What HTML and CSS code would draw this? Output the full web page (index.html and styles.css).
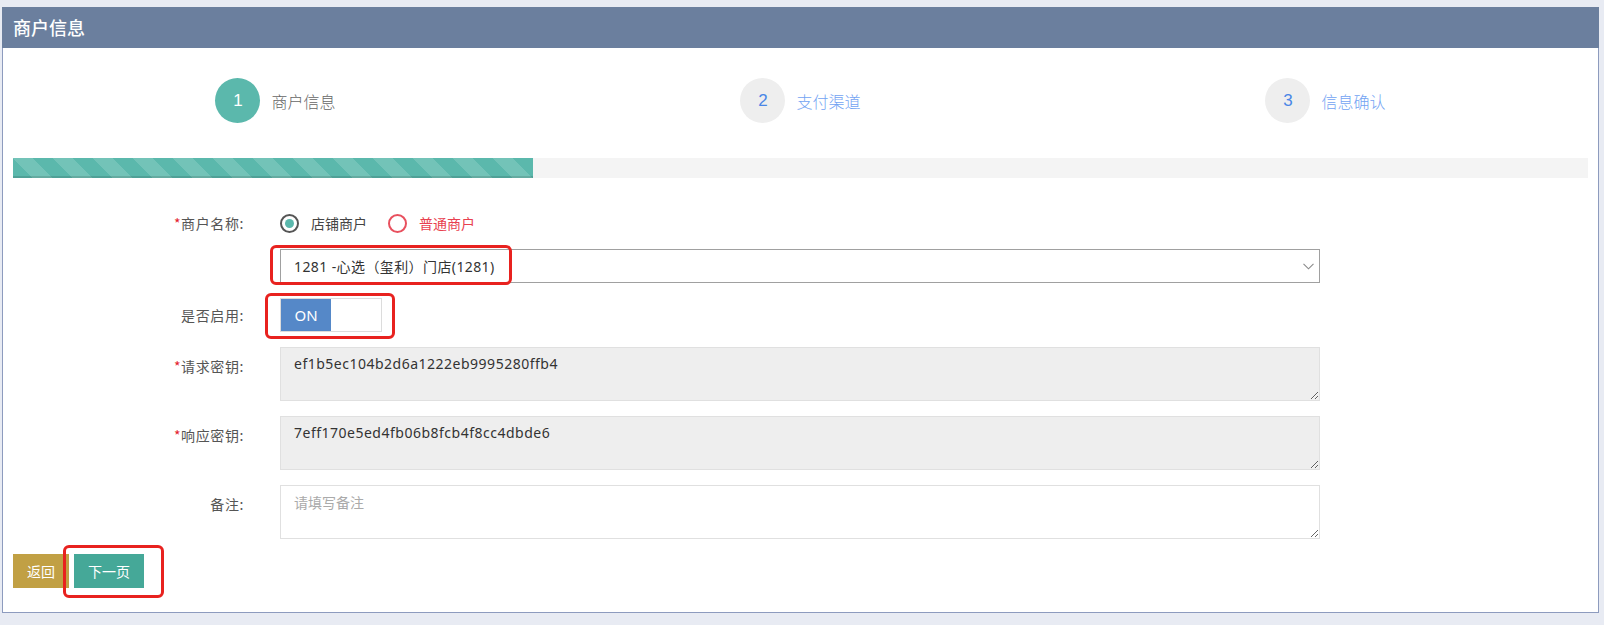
FILE: index.html
```html
<!DOCTYPE html>
<html lang="zh-CN">
<head>
<meta charset="utf-8">
<title>商户信息</title>
<link rel="stylesheet" href="styles.css">
</head>
<body>
<div class="page">
  <div class="panel">
    <div class="panel-head">商户信息</div>
    <div class="panel-body">
      <div class="steps">
        <div class="step active"><span class="step-num">1</span><span class="step-text">商户信息</span></div>
        <div class="step"><span class="step-num">2</span><span class="step-text">支付渠道</span></div>
        <div class="step"><span class="step-num">3</span><span class="step-text">信息确认</span></div>
      </div>
      <div class="progress"><div class="progress-fill" style="width:520px"></div></div>

      <div class="form">
        <div class="row row-radio">
          <label class="lbl"><span class="req">*</span>商户名称:</label>
          <div class="field radios">
            <span class="radio checked"><span class="radio-dot"></span>店铺商户</span>
            <span class="radio red"><span class="radio-dot"></span>普通商户</span>
          </div>
        </div>
        <div class="row row-select">
          <span class="lbl"></span>
          <div class="field select-wrap">
            <select class="select"><option>1281 -心选（玺利）门店(1281)</option></select>
            <svg class="chev" width="11" height="7" viewBox="0 0 11 7"><path d="M0.5 0.8 L5.5 5.8 L10.5 0.8" fill="none" stroke="#8a8a8a" stroke-width="1.1"/></svg>
          </div>
        </div>
        <div class="row row-toggle">
          <label class="lbl">是否启用:</label>
          <div class="field">
            <div class="switch"><span class="switch-on">ON</span><span class="switch-off"></span></div>
          </div>
        </div>
        <div class="row row-ta">
          <label class="lbl"><span class="req">*</span>请求密钥:</label>
          <div class="field"><textarea class="ta readonly" readonly>ef1b5ec104b2d6a1222eb9995280ffb4</textarea></div>
        </div>
        <div class="row row-ta">
          <label class="lbl"><span class="req">*</span>响应密钥:</label>
          <div class="field"><textarea class="ta readonly" readonly>7eff170e5ed4fb06b8fcb4f8cc4dbde6</textarea></div>
        </div>
        <div class="row row-ta">
          <label class="lbl">备注:</label>
          <div class="field"><textarea class="ta" placeholder="请填写备注"></textarea></div>
        </div>
      </div>

      <div class="actions">
        <button class="btn btn-back">返回</button>
        <button class="btn btn-next">下一页</button>
      </div>
    </div>
  </div>

  <div class="mark mark-select"></div>
  <div class="mark mark-switch"></div>
  <div class="mark mark-btn"></div>
</div>
</body>
</html>
```

FILE: styles.css
```css
* { box-sizing: border-box; }
html, body { margin: 0; padding: 0; }
body {
  background: #e8ebf3;
  font-family: "Noto Sans", "Noto Sans CJK SC", sans-serif;
  color: #333;
  width: 1604px;
  height: 625px;
  overflow: hidden;
}
.page {
  position: relative;
  padding-top: 7px;
}
.panel {
  margin: 0 5px 0 2px;
  border: 1px solid #8d9bbe;
  border-top: 0;
  background: #fff;
}
.panel-head {
  height: 41px;
  margin: 0 -1px;
  background: #6b7f9e;
  color: #fff;
  font-family: "Noto Sans CJK SC", sans-serif;
  font-size: 18px;
  font-weight: 500;
  line-height: 41px;
  padding-left: 11px;
}
.panel-body {
  padding: 30px 10px 24px 10px;
}
.steps {
  display: grid;
  grid-template-columns: repeat(3, 1fr);
  height: 45px;
}
.step {
  display: flex;
  align-items: center;
  justify-content: center;
  gap: 11px;
}
.step-num {
  width: 45px;
  height: 45px;
  border-radius: 50%;
  background: #eeeeee;
  color: #4a86e6;
  font-family: "Liberation Sans", sans-serif;
  font-size: 17px;
  display: flex;
  align-items: center;
  justify-content: center;
}
.step-text {
  font-family: "Noto Sans CJK SC", sans-serif;
  font-size: 16px;
  font-weight: 300;
  color: #72a3f3;
}
.step.active .step-num { background: #5bb8ac; color: #fff; }
.step.active .step-text { color: #666; }

.progress {
  margin-top: 35px;
  height: 20px;
  background: #f4f4f4;
}
.progress-fill {
  height: 20px;
  background-color: #5bb8ac;
  background-image: linear-gradient(45deg, rgba(255,255,255,.15) 25%, transparent 25%, transparent 50%, rgba(255,255,255,.15) 50%, rgba(255,255,255,.15) 75%, transparent 75%, transparent);
  background-size: 40px 40px;
  box-shadow: inset 0 -2px 0 rgba(0,0,0,.12);
}

.form {
  margin-top: 28px;
  display: flex;
  flex-direction: column;
}
.row {
  display: grid;
  grid-template-columns: 231px 1040px;
  column-gap: 36px;
  margin-bottom: 15px;
}
.row-radio { height: 34px; margin-bottom: 9px; }
.lbl {
  text-align: right;
  font-family: "Noto Sans CJK SC", sans-serif;
  font-size: 14px;
  letter-spacing: 0.6px;
  color: #555;
  line-height: 34px;
}
.req { color: #e4202c; }
.field { position: relative; }

.radios {
  display: flex;
  align-items: center;
  gap: 21px;
}
.radio {
  display: flex;
  align-items: center;
  gap: 12px;
  font-family: "Noto Sans CJK SC", sans-serif;
  font-size: 14px;
  color: #444;
}
.radio-dot {
  width: 19px;
  height: 19px;
  border-radius: 50%;
  border: 2px solid #555;
  display: flex;
  align-items: center;
  justify-content: center;
}
.radio.checked .radio-dot::after {
  content: "";
  width: 9px;
  height: 9px;
  border-radius: 50%;
  background: #5bb8ac;
}
.radio.red { color: #e8404f; }
.radio.red .radio-dot { border-color: #e8505e; }

.select-wrap { height: 34px; }
.select {
  appearance: none;
  -webkit-appearance: none;
  width: 1040px;
  height: 34px;
  border: 1px solid #a0a0a0;
  border-radius: 0;
  background: #fff;
  padding: 0 13px;
  font-family: "Noto Sans", "Noto Sans CJK SC", sans-serif;
  font-size: 14px;
  letter-spacing: 0.4px;
  color: #333;
  outline: none;
}
.chev {
  position: absolute;
  right: 6px;
  top: 14px;
}

.switch {
  width: 102px;
  height: 34px;
  border: 1px solid #dcdcdc;
  display: flex;
}
.switch-on {
  width: 50px;
  background: #5588c8;
  color: #fff;
  font-family: "Noto Sans", sans-serif;
  font-size: 15px;
  display: flex;
  align-items: center;
  justify-content: center;
}
.switch-off { flex: 1; background: #fff; }

.row-ta .lbl { line-height: 20px; padding-top: 9px; }
.ta {
  display: block;
  width: 1040px;
  height: 54px;
  border: 1px solid #e0e0e0;
  border-radius: 0;
  padding: 6px 13px;
  font-family: "Noto Sans", "Noto Sans CJK SC", sans-serif;
  font-size: 14px;
  letter-spacing: 0.5px;
  line-height: 20px;
  color: #333;
  background: #fff;
  outline: none;
  resize: vertical;
}
.ta.readonly { background: #eeeeee; }
.ta::placeholder { color: #aaa; font-family: "Noto Sans CJK SC", sans-serif; letter-spacing: 0; }

.actions {
  display: flex;
  gap: 5px;
}
.btn {
  height: 34px;
  border: 0;
  border-radius: 0;
  color: #fff;
  font-family: "Noto Sans CJK SC", sans-serif;
  font-size: 14px;
  padding: 0;
}
.btn-back { width: 56px; background: #c1a044; }
.btn-next { width: 70px; background: #45a898; }

.mark {
  position: absolute;
  border: 3px solid #e8221f;
  border-radius: 6px;
}
.mark-select { left: 270px; top: 245px; width: 242px; height: 40px; }
.mark-switch { left: 265px; top: 293px; width: 130px; height: 46px; }
.mark-btn { left: 63px; top: 545px; width: 101px; height: 53px; }
```
